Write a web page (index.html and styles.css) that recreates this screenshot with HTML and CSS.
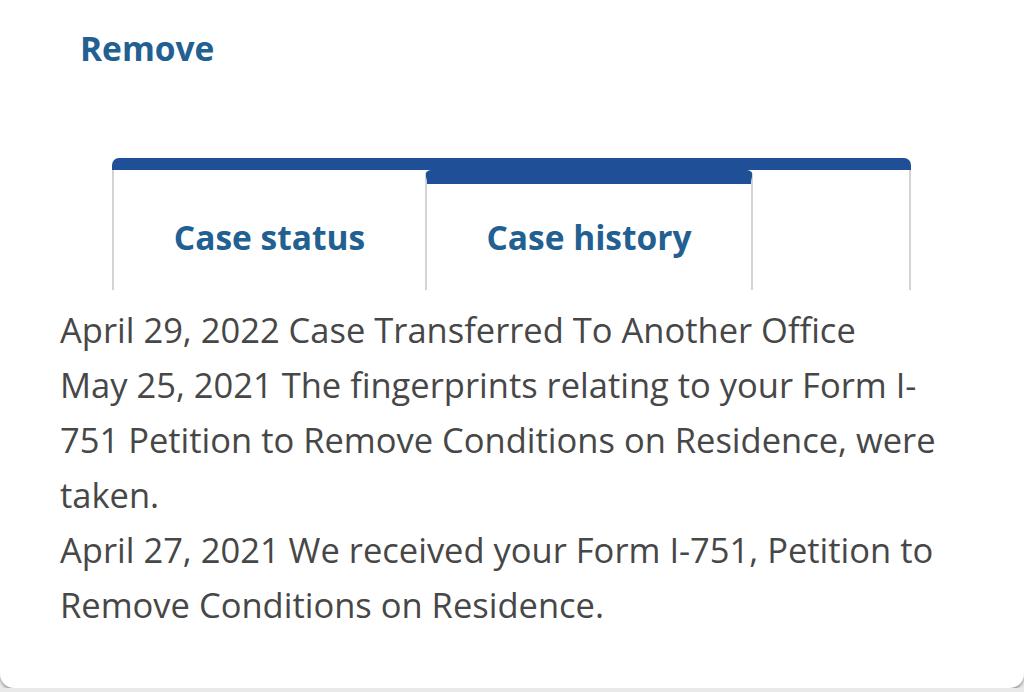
FILE: index.html
```html
<!DOCTYPE html>
<html lang="en">
<head>
    <meta charset="UTF-8">
    <title>Case history</title>
    <link rel="stylesheet" href="styles.css">
</head>
<body>
<div class="card">
    <a class="remove-link" href="#">Remove</a>
    <div class="tabs">
        <div class="tab">Case status</div>
        <div class="tab active">Case history</div>
        <div class="tab-rest"></div>
    </div>
    <div class="history">
        <p>April 29, 2022 Case Transferred To Another Office</p>
        <p>May 25, 2021 The fingerprints relating to your Form I-751 Petition to Remove Conditions on Residence, were taken.</p>
        <p>April 27, 2021 We received your Form I-751, Petition to Remove Conditions on Residence.</p>
    </div>
</div>
</body>
</html>
```

FILE: styles.css
```css
body {
  margin: 0;
  background: #e9e9e9;
  font-family: "Open Sans", "Noto Sans", sans-serif;
}
.card {
  background: #fff;
  height: 688px;
  border-radius: 0 0 14px 14px;
  box-shadow: 0 2px 3px rgba(0,0,0,0.35);
  padding: 24px 0 0 0;
  box-sizing: border-box;
}
.remove-link {
  display: inline-block;
  margin-left: 80px;
  font-size: 33.5px;
  font-weight: 700;
  color: #236092;
  text-decoration: none;
  line-height: 48px;
}
.tabs {
  display: flex;
  margin: 86px 0 0 112px;
  width: 799px;
  border-top: 12px solid #1f4f96;
  border-radius: 7px 7px 0 0;
  height: 120px;
}
.tab {
  width: 313px;
  border-left: 2px solid #d4d4d4;
  display: flex;
  align-items: center;
  justify-content: center;
  padding-top: 14px;
  font-size: 33.5px;
  font-weight: 700;
  color: #236092;
  box-sizing: border-box;
}
.tab.active {
  width: 328px;
  border-right: 2px solid #d4d4d4;
  border-top: 14px solid #1f4f96;
  border-radius: 6px 6px 0 0;
  padding-top: 0;
}
.tab-rest {
  flex: 1;
  border-right: 2px solid #d4d4d4;
}
.history {
  padding: 12px 0 0 60px;
  color: #474747;
  font-size: 34.5px;
  line-height: 55px;
  width: 905px;
}
.history p {
  margin: 0;
}
```
